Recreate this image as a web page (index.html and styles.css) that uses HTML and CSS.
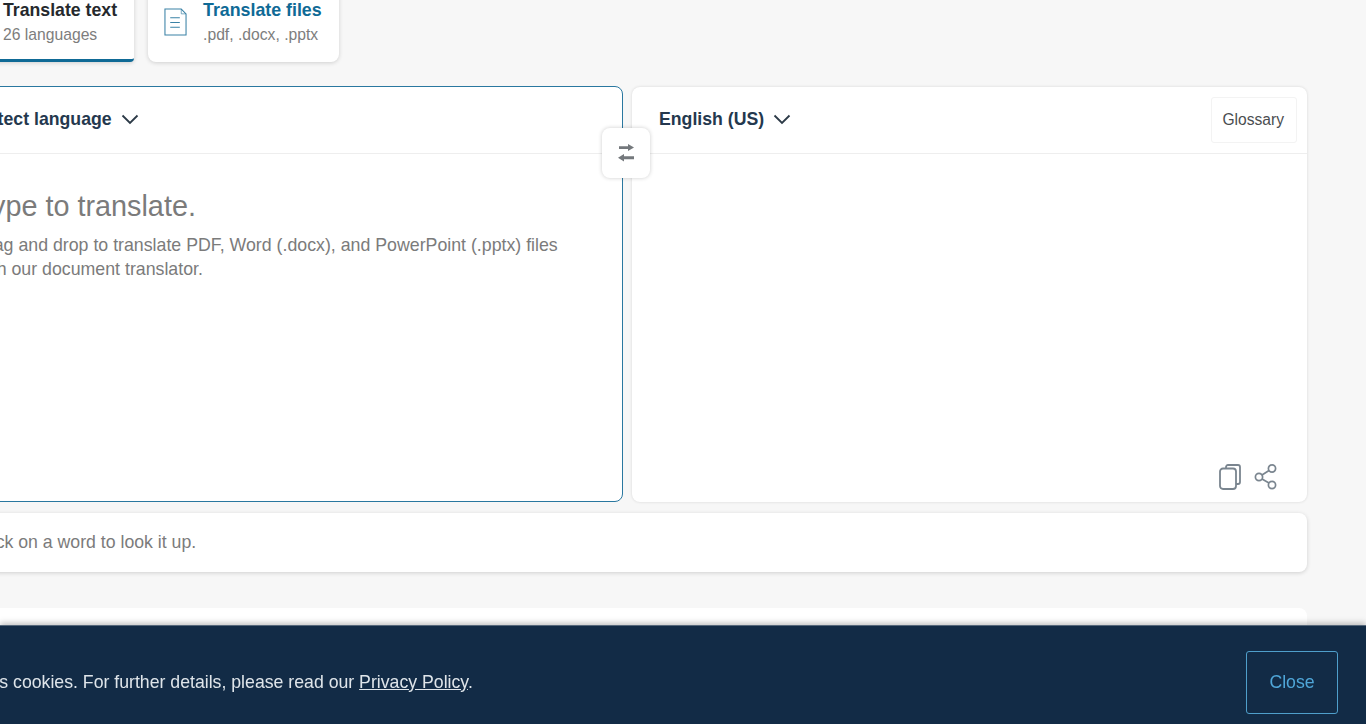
FILE: index.html
```html
<!DOCTYPE html>
<html lang="en">
<head>
<meta charset="utf-8">
<title>Translator</title>
<link rel="stylesheet" href="styles.css">
</head>
<body>
<main class="page">
  <nav class="tabs">
    <div class="tab tab-active">
      <span class="tab-icon"></span>
      <div class="tab-text">
        <div class="tab-title">Translate text</div>
        <div class="tab-sub">26 languages</div>
      </div>
    </div>
    <div class="tab">
      <svg class="tab-icon" viewBox="0 0 24 29" fill="none" stroke="#3a82a6" stroke-width="1.1">
        <path d="M1 1H18L23 6V28H1Z"/>
        <path d="M18 1V6H23" stroke-width="0.7"/>
        <path d="M6.500 10H16.500M6.500 15H16.500M6.500 20H16.500"/>
      </svg>
      <div class="tab-text">
        <div class="tab-title tab-title-link">Translate files</div>
        <div class="tab-sub">.pdf, .docx, .pptx</div>
      </div>
    </div>
  </nav>
  <section class="panels">
    <div class="panel panel-source">
      <header class="panel-head">
        <span class="lang">Detect language</span>
        <svg class="chev" viewBox="0 0 18 11" fill="none" stroke="#2c3a47" stroke-width="1.8"><path d="M1.5 1.5L9 9L16.5 1.5"/></svg>
      </header>
      <div class="panel-body">
        <p class="placeholder">Type to translate.</p>
        <p class="hint">Drag and drop to translate PDF, Word (.docx), and PowerPoint (.pptx) files<br>with our document translator.</p>
      </div>
    </div>
    <div class="panel panel-target">
      <header class="panel-head">
        <span class="lang">English (US)</span>
        <svg class="chev" viewBox="0 0 18 11" fill="none" stroke="#2c3a47" stroke-width="1.8"><path d="M1.5 1.5L9 9L16.5 1.5"/></svg>
        <span class="glossary">Glossary</span>
      </header>
      <div class="panel-body panel-body-target">
        <div class="actions">
          <svg class="act-copy" viewBox="0 0 22 26" fill="none" stroke="#7a858f" stroke-width="1.8">
            <path d="M7 4V3A2 2 0 0 1 9 1H19A2 2 0 0 1 21 3V18A2 2 0 0 1 19 20H17"/>
            <rect x="1" y="4.500" width="16" height="20.500" rx="3"/>
          </svg>
          <svg class="act-share" viewBox="0 0 24 26" fill="none" stroke="#7a858f" stroke-width="1.7">
            <circle cx="5" cy="13" r="3.600"/>
            <circle cx="18" cy="4.500" r="3.600"/>
            <circle cx="18" cy="21" r="3.600"/>
            <path d="M8 11L15 6.500M8 15L15 19"/>
          </svg>
        </div>
      </div>
    </div>
    <button class="swap" type="button" aria-label="Swap languages">
      <svg viewBox="0 0 16 18" fill="#74787c">
        <path d="M1 2.200H10V0L16 3.500L10 7V5H1Z"/>
        <path d="M16 12.200H6V10L0 13.750L6 17.500V15.200H16Z"/>
      </svg>
    </button>
  </section>
  <section class="lookup">Click on a word to look it up.</section>
  <section class="more"></section>
</main>
<aside class="cookie">
  <p class="cookie-text">This site uses cookies. For further details, please read our <a href="#">Privacy Policy</a>.</p>
  <button class="close" type="button">Close</button>
</aside>
</body>
</html>
```

FILE: styles.css
```css
* { box-sizing: border-box; }
html, body { margin: 0; height: 100%; overflow: hidden; }
body {
  background: #f7f7f7;
  font-family: "Liberation Sans", Arial, sans-serif;
  color: #2b2f33;
}
.page {
  width: 1359px;
  margin: -10px 0 0 -52px;
}
.tabs { display: flex; gap: 14px; height: 72px; }
.tab {
  display: flex;
  align-items: center;
  background: #fff;
  border-radius: 0 0 8px 8px;
  box-shadow: 0 1px 4px rgba(0,0,0,.16);
  padding: 0 17px 6px 16px;
}
.tab-active { border-bottom: 3px solid #0f6a96; padding: 0 17px 3px 16px; border-radius: 0 0 4px 4px; }
.tab-icon { display: block; width: 23px; height: 28px; margin: -2px 16px 0 0; flex: none; }
.tab-title { font-size: 17.7px; font-weight: 700; line-height: 24px; color: #25292d; white-space: nowrap; }
.tab-title-link { color: #0f6a96; font-size: 17.8px; }
.tab-sub { font-size: 15.7px; line-height: 26px; color: #7d7d7d; white-space: nowrap; }
.panels {
  position: relative;
  display: grid;
  grid-template-columns: 675px 675px;
  gap: 9px;
  margin-top: 24px;
  height: 416px;
}
.panel {
  background: #fff;
  border-radius: 8px;
  box-shadow: 0 0 3px rgba(0,0,0,.14);
  display: flex;
  flex-direction: column;
}
.panel-source { border: 1px solid #2a78a0; box-shadow: none; }
.panel-target { margin-top: 1px; }
.panel-head {
  display: flex;
  align-items: center;
  height: 67px;
  padding: 0 10px 2px 27px;
  border-bottom: 1px solid #eeeeee;
}
.panel-source .panel-head { padding-left: 26px; }
.lang { font-size: 17.7px; font-weight: 700; color: #24384e; }
.chev { width: 18px; height: 11px; margin-left: 9px; }
.glossary {
  margin: 2px 0 0 auto;
  height: 46px;
  padding: 0 12px 0 10px;
  display: flex;
  align-items: center;
  font-size: 15.6px;
  color: #4a4d50;
  border: 1px solid #f3f3f3;
  border-radius: 3px;
}
.panel-body { flex: 1; padding: 33px 26px 0; }
.panel-body-target { display: flex; align-items: flex-end; justify-content: flex-end; padding: 0 29px 12px 0; }
.placeholder { margin: 0 0 9px; font-size: 28.8px; line-height: 38px; color: #7b7b7b; }
.hint { margin: 0; font-size: 17.75px; line-height: 23.5px; color: #7b7b7b; white-space: nowrap; }
.actions { display: flex; align-items: center; gap: 13px; }
.act-copy { width: 22px; height: 26px; display: block; }
.act-share { width: 24px; height: 26px; display: block; }
.swap {
  position: absolute;
  left: 654px;
  top: 42px;
  width: 48px;
  height: 50px;
  padding: 0;
  display: flex;
  align-items: center;
  justify-content: center;
  background: #fff;
  border: 0;
  border-radius: 8px;
  box-shadow: 0 0 4px rgba(0,0,0,.2);
}
.swap svg { width: 16px; height: 18px; display: block; }
.lookup {
  margin-top: 11px;
  height: 59px;
  padding: 0 27px;
  display: flex;
  align-items: center;
  background: #fff;
  border-radius: 8px;
  box-shadow: 0 1px 4px rgba(0,0,0,.16);
  font-size: 17.7px;
  color: #7b7b7b;
}
.more {
  margin-top: 36px;
  height: 60px;
  background: #fff;
  border-radius: 8px;
}
.cookie {
  position: fixed;
  left: 0;
  right: 0;
  bottom: 0;
  height: 99px;
  display: flex;
  align-items: center;
  justify-content: space-between;
  padding: 14px 28px 0 0;
  background: #122b46;
  box-shadow: 0 -2px 6px rgba(0,0,0,.25);
  border-top: 1px solid #55677a;
}
.cookie-text {
  margin: 0 0 0 -100px;
  font-size: 17.7px;
  color: #dfe5ea;
  white-space: nowrap;
}
.cookie-text a { color: inherit; }
.close {
  width: 92px;
  height: 63px;
  background: transparent;
  border: 1px solid #4f9fcb;
  border-radius: 3px;
  color: #4fa6d8;
  font: 17.7px "Liberation Sans", Arial, sans-serif;
}
```
